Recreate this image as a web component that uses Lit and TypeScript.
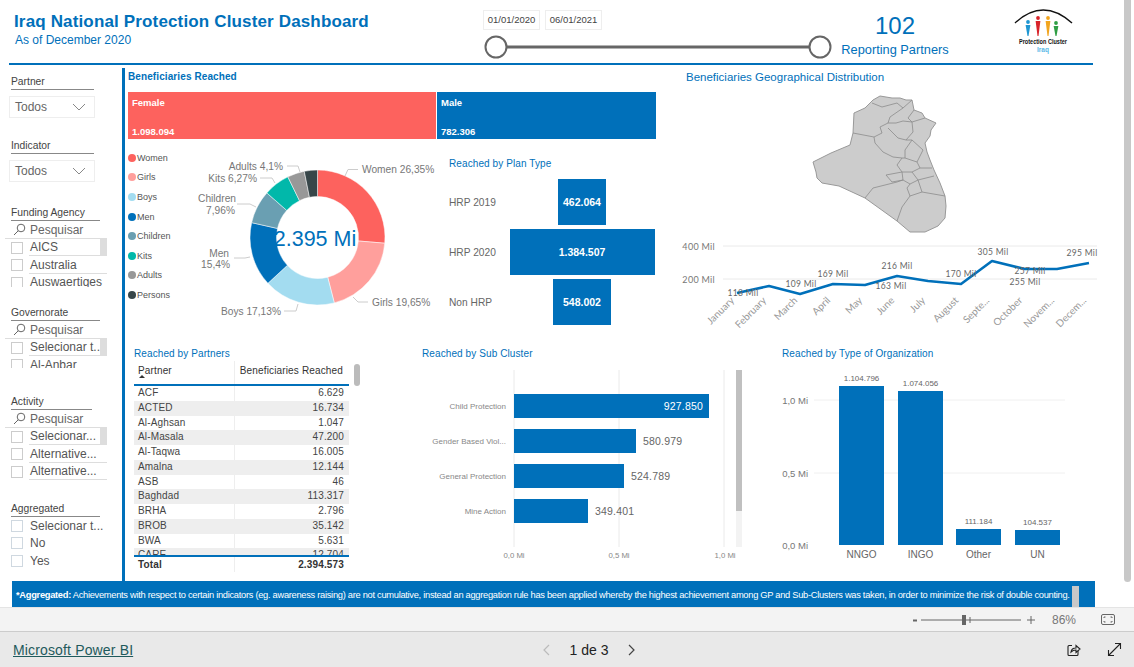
import { LitElement, html, svg, css } from "lit";
import { customElement } from "lit/decorators.js";

const BLUE = "#0070ba";

const donut = [
  { v: 26.35, c: "#fd625e" },
  { v: 19.65, c: "#ff9f9c" },
  { v: 17.13, c: "#a3dcf0" },
  { v: 15.4, c: "#0070ba" },
  { v: 7.96, c: "#6a9fb2" },
  { v: 6.27, c: "#01b8aa" },
  { v: 4.1, c: "#989898" },
  { v: 3.14, c: "#374649" },
];
const legend = [
  ["Women", "#fd625e"],
  ["Girls", "#ff9f9c"],
  ["Boys", "#a3dcf0"],
  ["Men", "#0070ba"],
  ["Children", "#6a9fb2"],
  ["Kits", "#01b8aa"],
  ["Adults", "#989898"],
  ["Persons", "#374649"],
];
const leaders = [
  "345,176 348,169.5 358,169.5",
  "353,297 358,302 368,302",
  "284,311 296,311 298,304",
  "234,258 245,258 250,257",
  "237,204 250,204 256,207",
  "260,178 272,178 275,183",
  "287,166 298,166 300,172",
];
const donutLabels: [string, number, number, string][] = [
  ["Women 26,35%", 362, 173, "start"],
  ["Girls 19,65%", 372, 306, "start"],
  ["Boys 17,13%", 281, 315, "end"],
  ["Men", 229, 257, "end"],
  ["15,4%", 230, 268, "end"],
  ["Children", 236, 202, "end"],
  ["7,96%", 235, 214, "end"],
  ["Kits 6,27%", 257, 182, "end"],
  ["Adults 4,1%", 283, 170, "end"],
];
const plans: [string, number, string][] = [
  ["HRP 2019", 462064, "462.064"],
  ["HRP 2020", 1384507, "1.384.507"],
  ["Non HRP", 548002, "548.002"],
];
const months: [string, number, number][] = [
  ["January", 737, 293],
  ["February", 769, 286],
  ["March", 800, 294],
  ["April", 833, 284],
  ["May", 865, 285],
  ["June", 897, 276],
  ["July", 928, 281],
  ["August", 961, 284],
  ["Septe...", 992, 261],
  ["October", 1025, 269],
  ["Novem...", 1057, 269],
  ["Decem...", 1089, 263],
];
const monthLabels: [string, number, number][] = [
  ["118 Mil", 743, 296],
  ["109 Mil", 801, 287],
  ["169 Mil", 833, 277],
  ["216 Mil", 897, 269],
  ["163 Mil", 891, 289],
  ["170 Mil", 961, 277],
  ["305 Mil", 993, 255],
  ["257 Mil", 1030, 274],
  ["255 Mil", 1025, 285],
  ["295 Mil", 1082, 256],
];
const partners = [
  ["ACF", "6.629"],
  ["ACTED", "16.734"],
  ["Al-Aghsan", "1.047"],
  ["Al-Masala", "47.200"],
  ["Al-Taqwa", "16.005"],
  ["Amalna", "12.144"],
  ["ASB", "46"],
  ["Baghdad", "113.317"],
  ["BRHA", "2.796"],
  ["BROB", "35.142"],
  ["BWA", "5.631"],
  ["CARE", "12.704"],
];
const clusters: [string, number, string, number][] = [
  ["Child Protection", 709, "927.850", 394],
  ["Gender Based Viol...", 636, "580.979", 429],
  ["General Protection", 624, "524.789", 464],
  ["Mine Action", 588, "349.401", 499],
];
const orgs: [string, number, number, string][] = [
  ["NNGO", 839, 386, "1.104.796"],
  ["INGO", 898, 391, "1.074.056"],
  ["Other", 956, 529, "111.184"],
  ["UN", 1015, 530, "104.537"],
];

const outline =
  "813,162 831,153 850,145 853,133 854,113 865,108 873,100 880,96 892,98 900,98 906,100 912,100 914,110 922,113 925,118 936,123 931,130 930,136 925,143 927,152 930,160 934,170 940,183 945,196 946,206 945,218 938,226 925,232 910,232 897,221 865,198 839,186 822,183 817,178 816,172";
const borders = [
  "853,133 874,137 875,143 883,152 893,157 902,158 897,165 902,172 886,175 892,182 903,180 897,182 873,188 865,198",
  "897,221 902,207 910,196 907,188 910,184 903,180 902,172",
  "874,137 882,133 880,127 888,123 890,117 903,108 912,100",
  "872,103 882,107 897,103 903,108",
  "888,123 896,123 903,121 912,122 913,132 906,140 898,138 888,128",
  "906,140 912,140 905,150 905,158 902,158",
  "905,158 917,162 920,168 912,172 902,172",
  "917,162 923,150 912,140",
  "920,168 932,168",
  "912,172 918,180 910,184",
  "918,180 934,176",
  "910,196 922,192 918,180",
  "922,192 945,196",
  "914,110 908,118 912,122 925,118",
];

function arc(startPct: number, endPct: number, cx: number, cy: number, r1: number, r2: number) {
  const a0 = (startPct / 100) * Math.PI * 2 - Math.PI / 2;
  const a1 = (endPct / 100) * Math.PI * 2 - Math.PI / 2;
  const large = endPct - startPct > 50 ? 1 : 0;
  const p = (r: number, a: number) => `${cx + r * Math.cos(a)} ${cy + r * Math.sin(a)}`;
  return `M${p(r1, a0)} A${r1} ${r1} 0 ${large} 1 ${p(r1, a1)} L${p(r2, a1)} A${r2} ${r2} 0 ${large} 0 ${p(r2, a0)} Z`;
}

function person(x: number, top: number, bottom: number, color: string) {
  return svg`<circle cx=${x} cy=${top} r="1.9" fill=${color}></circle>
    <path d="M${x - 2.4} ${top + 3} L${x + 2.4} ${top + 3} L${x + 0.5} ${bottom} L${x - 0.5} ${bottom} Z" fill=${color}></path>`;
}

@customElement("app-root")
export class AppRoot extends LitElement {
  static styles = css`
    :host {
      --blue: #0070ba;
      display: flex;
      flex-direction: column;
      width: 1134px;
      height: 667px;
      overflow: hidden;
      position: relative;
      background: #fff;
      color: #555;
      font-family: "Liberation Sans", Arial, sans-serif;
    }
    svg { display: block; }
    .report { height: 607px; flex: none; }
    .page-scroll {
      position: absolute; right: 3px; top: -6px; width: 7px; height: 588px;
      background: #c8c8c8; border-radius: 4px;
    }
    .header {
      display: grid;
      grid-template-columns: 474px 350px 124px 1fr;
      width: 1084px; height: 63px; margin-left: 9px;
      border-bottom: 2.5px solid var(--blue);
      box-sizing: content-box;
    }
    .heading { padding: 12px 0 0 5px; color: var(--blue); }
    .heading h1 { margin: 0; font-size: 17px; line-height: 20px; font-weight: 700; letter-spacing: 0.15px; white-space: nowrap; }
    .heading p { margin: 0 0 0 1px; font-size: 12px; line-height: 16px; }
    .dates { display: flex; gap: 5px; margin-top: 10px; }
    .date {
      width: 57px; height: 20px; box-sizing: border-box; border: 1px solid #eee;
      font-size: 9.5px; line-height: 18px; text-align: center; color: #444;
    }
    .count { text-align: center; color: var(--blue); padding-top: 12px; }
    .count b { display: block; font-weight: 400; font-size: 24px; line-height: 28px; }
    .count span { display: block; font-size: 12.8px; line-height: 18px; margin-top: 1px; white-space: nowrap; }
    .logo { margin: 8px 0 0 54px; }

    .body { display: flex; height: 516px; }
    .side {
      width: 122px; flex: none; box-sizing: border-box; padding-top: 11px;
      display: grid; grid-template-rows: 64px 67px 100px 89px 107px auto;
    }
    .slabel {
      margin-left: 11px; height: 13px; line-height: 12px; font-size: 10.3px; color: #444;
      border-bottom: 1px solid #888; white-space: nowrap;
    }
    .w83 { width: 83px; }
    .w89 { width: 89px; }
    .w81 { width: 81px; }
    .drop {
      margin: 6px 0 0 9px; width: 86px; height: 22px; box-sizing: border-box;
      border: 1px solid #eee; display: flex; align-items: center; justify-content: space-between;
      padding: 0 8px 0 5px; font-size: 12px; color: #666;
    }
    .search {
      margin-left: 5px; width: 102px; height: 18px; box-sizing: border-box; border-bottom: 1px solid #ddd;
      display: flex; align-items: center; gap: 4px; padding-left: 8px; font-size: 12px; color: #666;
    }
    .list { overflow: hidden; }
    .item { position: relative; display: flex; align-items: center; height: 17.5px; padding-left: 11px; font-size: 12px; color: #555; }
    .box { width: 12px; height: 12px; flex: none; border: 1px solid #ccc; box-sizing: border-box; margin-right: 7px; }
    .txt { white-space: nowrap; }
    .line .txt { width: 78px; margin-left: -1px; padding-left: 1px; box-sizing: border-box; border-bottom: 1px solid #ddd; height: 17px; line-height: 17px; }
    .thumb { position: absolute; left: 100px; top: 0; width: 7px; height: 17px; background: #ddd; }
    .bluebox .box { border-color: #cfd8e0; }

    .main { flex: 1; margin-top: 3px; border-left: 3px solid var(--blue); min-width: 0; }
    .top { display: grid; grid-template-columns: 555px 1fr; height: 277px; }
    .vt { margin: 0; font-size: 10px; line-height: 16px; font-weight: 400; color: var(--blue); white-space: nowrap; letter-spacing: 0.1px; }
    .plan .vt, .bottom .vt { line-height: 18px; margin-bottom: -2px; }
    .ben { padding: 1px 0 0 3px; font-weight: 700; }
    .tree { display: flex; gap: 1px; margin: 7px 0 0 3px; height: 47px; color: #fff; font-size: 9.5px; font-weight: 700; }
    .tree div { box-sizing: border-box; padding: 5px 4px 2px; display: flex; flex-direction: column; justify-content: space-between; }
    .female { width: 308px; background: #fd625e; }
    .male { width: 219px; background: var(--blue); }
    .mid { display: flex; margin-top: 9px; }
    .legend { width: 73px; flex: none; padding-left: 3px; box-sizing: border-box; }
    .legend div { height: 19.6px; display: flex; align-items: center; font-size: 9px; color: #555; }
    .legend i { width: 8px; height: 8px; border-radius: 50%; margin-right: 1px; flex: none; }
    .plan { margin-left: 1px; padding-top: 7px; }
    .rows { margin-top: 8px; display: grid; gap: 4px; }
    .prow { display: flex; align-items: center; height: 46px; font-size: 10.2px; color: #666; }
    .prow > span { width: 60px; flex: none; }
    .pbar { width: 146px; display: flex; justify-content: center; }
    .pbar div { height: 46px; line-height: 46px; background: var(--blue); color: #fff; font-weight: 700; font-size: 10.5px; text-align: center; }
    .geo { font-size: 11.5px; line-height: 16px; padding: 1px 0 0 6px; color: var(--blue); white-space: nowrap; }
    .geosvg { margin-top: 3px; }

    .bottom { display: grid; grid-template-columns: 290px 360px 1fr; height: 236px; }
    .tcell { position: relative; padding-left: 9px; }
    .grid { width: 215px; font-size: 10px; letter-spacing: 0.15px; color: #444; }
    .thead { display: grid; grid-template-columns: 100px 1fr; height: 23px; border-bottom: 2.5px solid var(--blue); }
    .thead div { position: relative; padding: 4px 6px 0 4px; line-height: 12px; color: #333; }
    .thead div + div { border-left: 1px solid #eee; text-align: right; white-space: nowrap; }
    .sort { position: absolute; left: 5px; top: 14px; width: 0; height: 0; border: 3px solid transparent; border-bottom: 3px solid #333; border-top: 0; }
    .tbody { height: 168.5px; overflow: hidden; }
    .trow { display: grid; grid-template-columns: 100px 1fr; height: 14.75px; line-height: 14.75px; }
    .trow:nth-child(even) { background: #eee; }
    .trow div { padding: 0 5px 0 4px; }
    .trow div + div { text-align: right; border-left: 1px solid #eee; }
    .ttotal { display: grid; grid-template-columns: 100px 1fr; border-top: 2.5px solid var(--blue); height: 15px; line-height: 15px; font-weight: 700; color: #333; }
    .ttotal div { padding: 0 5px 0 4px; }
    .ttotal div + div { text-align: right; border-left: 1px solid #eee; }
    .tscroll { position: absolute; left: 229px; top: 19px; width: 6px; height: 22px; border-radius: 3px; background: #bbb; }
    .sub .vt { padding-left: 7px; }
    .org .vt { padding-left: 7px; }

    .banner {
      margin-left: 12px; width: 1083px; height: 26px; box-sizing: border-box; position: relative;
      background: var(--blue); color: #fff; font-size: 9.3px; letter-spacing: -0.285px; line-height: 29px; padding-left: 4px; white-space: nowrap; overflow: hidden;
    }
    .banner span { position: absolute; left: 1060px; top: 5px; width: 7px; height: 21px; background: #c8c8c8; }
    .zoombar {
      flex: none; background: #f3f3f3; border-top: 1px solid #e4e4e4; box-sizing: border-box;
      border-bottom: 1px solid #ccc; display: flex; align-items: center; justify-content: flex-end; color: #666; font-size: 12px;
      height: 25px;
    }
    .zoomsvg { margin-right: 9px; }
    .pct { margin: 0 25px 0 0; color: #777; font-size: 12px; }
    .foot {
      flex: 1; background: #e9e9e9; display: grid; grid-template-columns: 529px 94px 1fr; align-items: center; padding: 0 12px 0 13px;
    }
    .foot a { font-size: 14px; color: #1f5a5c; text-decoration: underline; letter-spacing: 0.15px; }
    .pager { display: flex; align-items: center; justify-content: space-between; font-size: 14px; color: #222; }
    .acts { display: flex; justify-content: flex-end; gap: 26px; align-items: center; }
  `;

  private check(text: string, thumb = false) {
    return html`<div class="item line"><span class="box"></span><span class="txt">${text}</span>
      ${thumb ? html`<span class="thumb"></span>` : ""}</div>`;
  }

  private lens() {
    return html`<svg width="13" height="13" viewBox="0 0 13 13" fill="none" stroke="#666" stroke-width="1">
      <circle cx="8" cy="5" r="3.8"></circle><path d="M5.2 7.8 L1 12"></path></svg>`;
  }

  private chevron() {
    return html`<svg width="14" height="8" viewBox="0 0 14 8" fill="none" stroke="#888" stroke-width="1"><path d="M1 1 L7 7 L13 1"></path></svg>`;
  }

  private renderHeader() {
    return html`<header class="header">
      <div class="heading">
        <h1>Iraq National Protection Cluster Dashboard</h1>
        <p>As of December 2020</p>
      </div>
      <div>
        <div class="dates"><div class="date">01/01/2020</div><div class="date">06/01/2021</div></div>
        <svg width="350" height="30" viewBox="483 30 350 30">
          <line x1="496" y1="47" x2="820" y2="47" stroke="#666" stroke-width="3"></line>
          <circle cx="496" cy="47" r="10.5" fill="#fff" stroke="#666" stroke-width="2"></circle>
          <circle cx="820" cy="47" r="10.5" fill="#fff" stroke="#666" stroke-width="2"></circle>
        </svg>
      </div>
      <div class="count"><b>102</b><span>Reporting Partners</span></div>
      <svg class="logo" width="76" height="50" viewBox="1011 8 76 50">
        <path d="M1015 23 Q1043 -3 1072 23" fill="none" stroke="#111" stroke-width="1.4"></path>
        ${person(1028, 22, 36, "#1e96d2")}
        ${person(1038, 18, 36, "#d8232a")}
        ${person(1048, 18, 36, "#f2a51f")}
        ${person(1056, 23, 36, "#2f9e44")}
        <text x="1019" y="44" textLength="48" lengthAdjust="spacingAndGlyphs" font-size="7.2" font-weight="700" fill="#111">Protection Cluster</text>
        <text x="1043" y="52" text-anchor="middle" font-size="6.5" font-weight="700" fill="#5bb8e6">Iraq</text>
      </svg>
    </header>`;
  }

  private renderSide() {
    return html`<aside class="side">
      <section><div class="slabel w83">Partner</div><div class="drop">Todos ${this.chevron()}</div></section>
      <section><div class="slabel w83">Indicator</div><div class="drop">Todos ${this.chevron()}</div></section>
      <section>
        <div class="slabel w89">Funding Agency</div>
        <div class="search">${this.lens()}Pesquisar</div>
        <div class="list" style="height:48px">
          ${this.check("AICS", true)}${this.check("Australia")}${this.check("Auswaertiges")}
        </div>
      </section>
      <section>
        <div class="slabel w89">Governorate</div>
        <div class="search">${this.lens()}Pesquisar</div>
        <div class="list" style="height:29px">
          ${this.check("Selecionar t...", true)}${this.check("Al-Anbar")}
        </div>
      </section>
      <section>
        <div class="slabel w81">Activity</div>
        <div class="search">${this.lens()}Pesquisar</div>
        <div class="list">
          ${this.check("Selecionar...", true)}${this.check("Alternative...")}${this.check("Alternative...")}
        </div>
      </section>
      <section class="bluebox">
        <div class="slabel w89">Aggregated</div>
        ${["Selecionar t...", "No", "Yes"].map(
          (t) => html`<div class="item"><span class="box"></span><span class="txt">${t}</span></div>`
        )}
      </section>
    </aside>`;
  }

  private renderDonut() {
    let acc = 0;
    return html`<svg width="250" height="190" viewBox="198 148 250 190">
      ${donut.map((d) => {
        const p = arc(acc, acc + d.v, 317.5, 237.5, 67.5, 41);
        acc += d.v;
        return svg`<path d=${p} fill=${d.c} stroke="#fff" stroke-width="0.5"></path>`;
      })}
      ${leaders.map((l) => svg`<polyline points=${l} fill="none" stroke="#ccc" stroke-width="1"></polyline>`)}
      ${donutLabels.map(
        ([t, x, y, a]) => svg`<text x=${x} y=${y} text-anchor=${a} font-size="10.2" fill="#777">${t}</text>`
      )}
      <text x="315" y="246" text-anchor="middle" font-size="21.5" fill=${BLUE}>2.395 Mi</text>
    </svg>`;
  }

  private renderGeo() {
    const line = months.map((m) => `${m[1]},${m[2]}`).join(" ");
    return html`<svg class="geosvg" width="420" height="257" viewBox="680 88 420 257">
      <polygon points=${outline} fill="#ccc" stroke="#999" stroke-width="1"></polygon>
      ${borders.map((b) => svg`<polyline points=${b} fill="none" stroke="#8c8c8c" stroke-width="0.8"></polyline>`)}
      <line x1="723" y1="246" x2="1097" y2="246" stroke="#eaeaea"></line>
      <line x1="723" y1="279" x2="1097" y2="279" stroke="#eaeaea"></line>
      <text x="715" y="250" text-anchor="end" font-size="9" letter-spacing="0.3" fill="#777" font-family="Lato">400 Mil</text>
      <text x="715" y="283" text-anchor="end" font-size="9" letter-spacing="0.3" fill="#777" font-family="Lato">200 Mil</text>
      <polyline points=${line} fill="none" stroke=${BLUE} stroke-width="2.6" stroke-linejoin="round"></polyline>
      ${monthLabels.map(
        ([t, x, y]) => svg`<text x=${x} y=${y} text-anchor="middle" font-size="8.5" letter-spacing="0.3" fill="#666" font-family="Lato">${t}</text>`
      )}
      ${months.map(
        ([t, x]) => svg`<text transform="translate(${x - 2} 301) rotate(-45)" text-anchor="end" font-size="10" fill="#999" font-family="Lato">${t}</text>`
      )}
    </svg>`;
  }

  private renderTable() {
    return html`<div class="tcell">
      <h3 class="vt">Reached by Partners</h3>
      <div class="grid">
        <div class="thead"><div>Partner<span class="sort"></span></div><div>Beneficiaries Reached</div></div>
        <div class="tbody">
          ${partners.map((p) => html`<div class="trow"><div>${p[0]}</div><div>${p[1]}</div></div>`)}
        </div>
        <div class="ttotal"><div>Total</div><div>2.394.573</div></div>
      </div>
      <span class="tscroll"></span>
    </div>`;
  }

  private renderSub() {
    return html`<div class="sub">
      <h3 class="vt">Reached by Sub Cluster</h3>
      <svg width="360" height="220" viewBox="415 361 360 220">
        ${[514, 619, 724].map((x) => svg`<line x1=${x} y1="370" x2=${x} y2="547" stroke="#eaeaea"></line>`)}
        ${clusters.map(
          ([n, r, v, y], i) => svg`
          <rect x="514" y=${y} width=${r - 514} height="24" fill=${BLUE}></rect>
          <text x="506" y=${y + 15} text-anchor="end" font-size="8" fill="#888">${n}</text>
          ${i === 0
            ? svg`<text x="703" y=${y + 16} text-anchor="end" font-size="10.5" letter-spacing="0.2" fill="#fff">${v}</text>`
            : svg`<text x=${r + 7} y=${y + 16} font-size="10.5" letter-spacing="0.2" fill="#666">${v}</text>`}`
        )}
        <rect x="736" y="370" width="6" height="177" fill="#f3f3f3"></rect>
        <rect x="736" y="370" width="6" height="141" fill="#c0c0c0"></rect>
        <text x="514" y="558" text-anchor="middle" font-size="7.8" fill="#888">0,0 Mi</text>
        <text x="619" y="558" text-anchor="middle" font-size="7.8" fill="#888">0,5 Mi</text>
        <text x="725" y="558" text-anchor="middle" font-size="7.8" fill="#888">1,0 Mi</text>
      </svg>
    </div>`;
  }

  private renderOrg() {
    return html`<div class="org">
      <h3 class="vt">Reached by Type of Organization</h3>
      <svg width="325" height="220" viewBox="775 361 325 220">
        ${[400, 473].map((y) => svg`<line x1="814" y1=${y} x2="1065" y2=${y} stroke="#f0f0f0"></line>`)}
        ${[["1,0 Mi", 404], ["0,5 Mi", 477], ["0,0 Mi", 549]].map(
          ([t, y]) => svg`<text x="808" y=${y} text-anchor="end" font-size="9.5" fill="#777">${t}</text>`
        )}
        ${orgs.map(
          ([n, x, y, v]) => svg`
          <rect x=${x} y=${y} width="45" height=${545 - y} fill=${BLUE}></rect>
          <text x=${x + 22.5} y=${y - 5} text-anchor="middle" font-size="8" fill="#666">${v}</text>
          <text x=${x + 22.5} y="558" text-anchor="middle" font-size="10" fill="#666">${n}</text>`
        )}
      </svg>
    </div>`;
  }

  render() {
    return html`
      <div class="report">
        ${this.renderHeader()}
        <div class="body">
          ${this.renderSide()}
          <main class="main">
            <div class="top">
              <div>
                <h3 class="vt ben">Beneficiaries Reached</h3>
                <div class="tree">
                  <div class="female"><span>Female</span><span>1.098.094</span></div>
                  <div class="male"><span>Male</span><span>782.306</span></div>
                </div>
                <div class="mid">
                  <div class="legend">
                    ${legend.map((l) => html`<div><i style="background:${l[1]}"></i>${l[0]}</div>`)}
                  </div>
                  ${this.renderDonut()}
                  <div class="plan">
                    <h3 class="vt">Reached by Plan Type</h3>
                    <div class="rows">
                      ${plans.map(
                        ([n, v, t]) => html`<div class="prow"><span>${n}</span>
                          <div class="pbar"><div style="width:${(v / 1384507) * 145}px">${t}</div></div></div>`
                      )}
                    </div>
                  </div>
                </div>
              </div>
              <div>
                <div class="geo">Beneficiaries Geographical Distribution</div>
                ${this.renderGeo()}
              </div>
            </div>
            <div class="bottom">
              ${this.renderTable()}${this.renderSub()}${this.renderOrg()}
            </div>
          </main>
        </div>
        <div class="banner"><b>*Aggregated:</b> Achievements with respect to certain indicators (eg. awareness raising) are not cumulative, instead an aggregation rule has been applied whereby the highest achievement among GP and Sub-Clusters was taken, in order to minimize the risk of double counting.<span></span></div>
      </div>
      <span class="page-scroll"></span>
      <div class="zoombar">
        <svg class="zoomsvg" width="130" height="14" viewBox="0 0 130 14" fill="none" stroke="#666">
          <path d="M0 7.5 H4" stroke-width="2"></path>
          <path d="M8 7 H108" stroke-width="1"></path>
          <rect x="49" y="2" width="4" height="10" fill="#666" stroke="none"></rect>
          <path d="M57 4 V10" stroke-width="1"></path>
          <path d="M114 7 H122 M118 3 V11" stroke-width="1"></path>
        </svg>
        <span class="pct">86%</span>
        <svg style="margin-right:19px" width="14" height="11" viewBox="0 0 14 11" fill="none" stroke="#666">
          <rect x="0.5" y="0.5" width="13" height="10" rx="1.5"></rect>
          <path d="M3 4 V3 H4.5 M9.5 3 H11 V4 M11 7 V8 H9.5 M4.5 8 H3 V7"></path>
        </svg>
      </div>
      <footer class="foot">
        <div><a>Microsoft Power BI</a></div>
        <div class="pager">
          <svg width="8" height="12" viewBox="0 0 8 12" fill="none" stroke="#bbb" stroke-width="1.2"><path d="M7 1 L2 6 L7 11"></path></svg>
          <span>1 de 3</span>
          <svg width="8" height="12" viewBox="0 0 8 12" fill="none" stroke="#444" stroke-width="1.2"><path d="M1 1 L6 6 L1 11"></path></svg>
        </div>
        <div class="acts">
          <svg width="14" height="14" viewBox="0 0 14 14" fill="none" stroke="#222" stroke-width="1.1">
            <path d="M5 2.5 H2 Q1 2.5 1 3.5 V11.5 Q1 12.5 2 12.5 H10 Q11 12.5 11 11.5 V8"></path>
            <path d="M4 9 Q4.5 5 9 5 V2.5 L13 6 L9 9.5 V7 Q6 7 4 9 Z"></path>
          </svg>
          <svg width="15" height="15" viewBox="0 0 15 15" fill="none" stroke="#222" stroke-width="1.1">
            <path d="M1.5 13.5 L13.5 1.5 M8 1.5 H13.5 V7 M1.5 8 V13.5 H7"></path>
          </svg>
        </div>
      </footer>
    `;
  }
}
